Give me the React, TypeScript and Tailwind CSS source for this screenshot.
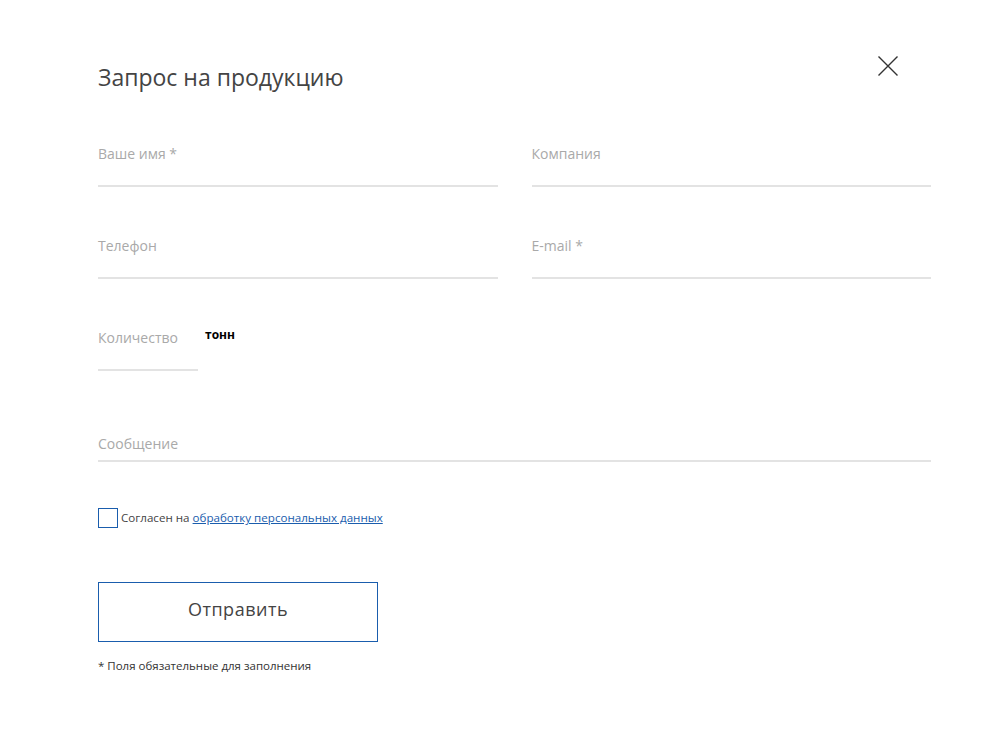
import React from 'react';

const font = { fontFamily: '"Open Sans", "DejaVu Sans", sans-serif' };

const Field: React.FC<{ label: string; className?: string }> = ({ label, className = '' }) => (
  <div className={`pt-[6px] pb-[21px] border-b-2 border-[#e3e3e3] ${className}`}>
    <span className="block text-[14px] leading-[20px] text-[#a9a9a9]">{label}</span>
  </div>
);

export default function App() {
  return (
    <div className="w-[1000px] h-[730px] bg-white pl-[98px] pr-[69px] pt-[56px]" style={font}>
      <div className="flex justify-between items-start">
        <h1 className="mt-[5px] text-[23px] leading-[32px] text-[#444]">
          Запрос на продукцию
        </h1>
        <button className="w-5 h-5 mr-[33px]" aria-label="Закрыть">
          <svg viewBox="0 0 20 20" width="20" height="20" fill="none" stroke="#333" strokeWidth="1.4">
            <path d="M0.5 0.5 L19.5 19.5 M19.5 0.5 L0.5 19.5" />
          </svg>
        </button>
      </div>

      <div className="mt-[45px] grid grid-cols-2 gap-x-[34px] gap-y-[43px]">
        <Field label="Ваше имя *" />
        <Field label="Компания" />
        <Field label="Телефон" />
        <Field label="E-mail *" />
      </div>

      <div className="mt-[43px] flex items-start">
        <Field label="Количество" className="w-[100px]" />
        <span className="ml-[7px] mt-[3px] text-[12px] leading-[20px] font-bold text-black">тонн</span>
      </div>

      <div className="mt-[57px] pt-[6px] pb-[6px] border-b-2 border-[#e3e3e3]">
        <span className="block text-[14px] leading-[20px] text-[#a9a9a9]">Сообщение</span>
      </div>

      <label className="mt-[46px] flex items-center">
        <span className="w-5 h-5 border border-[#1a5dad] bg-white" />
        <span className="ml-[3px] text-[11.6px] text-[#444]">
          Согласен на{' '}
          <a href="#" className="text-[#1a5dad] underline">
            обработку персональных данных
          </a>
        </span>
      </label>

      <button className="mt-[54px] w-[280px] h-[60px] pb-[5px] border border-[#1a5dad] text-[18px] text-[#444] tracking-[0.5px]">
        Отправить
      </button>

      <p className="mt-[16px] text-[11.5px] leading-[16px] text-[#333]">* Поля обязательные для заполнения</p>
    </div>
  );
}
